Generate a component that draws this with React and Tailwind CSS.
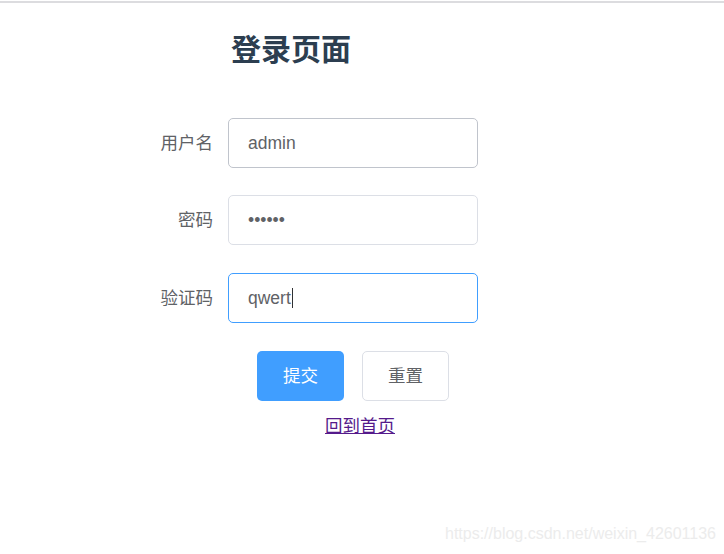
import React from "react";

const font = { fontFamily: '"Liberation Sans", "Noto Sans CJK SC", sans-serif' };

function Row({ label, value, border, caret, mt }) {
  return (
    <div className={`flex items-center ${mt}`}>
      <label className="w-[100px] pr-[15px] text-right text-[17.5px] text-[#606266]">{label}</label>
      <div
        className={`w-[250px] h-[50px] rounded-[5px] border bg-white flex items-center px-[19px] text-[17.5px] text-[#606266] ${border}`}
      >
        <span>{value}</span>
        {caret && <span className="w-px h-[20px] bg-[#303133] ml-px" />}
      </div>
    </div>
  );
}

export default function App() {
  return (
    <div className="w-[724px] h-[554px] bg-white relative overflow-hidden" style={font}>
      <div className="mt-px h-[2px] bg-[#dcdcdf]" />
      <h1 className="mt-[27px] ml-[231px] text-[30px] leading-[40px] font-bold text-[#2c3e50]">登录页面</h1>

      <div className="ml-[128px] mt-[48px]">
        <Row label="用户名" value="admin" border="border-[#c0c4cc]" mt="" />
        <Row label="密码" value="••••••" border="border-[#dcdfe6]" mt="mt-[27px]" />
        <Row label="验证码" value="qwert" border="border-[#409eff]" caret mt="mt-[28px]" />

        <div className="flex gap-[18px] ml-[129px] mt-[28px]">
          <button className="w-[87px] h-[50px] rounded-[5px] bg-[#409eff] text-white text-[17.5px]">提交</button>
          <button className="w-[87px] h-[50px] rounded-[5px] border border-[#dcdfe6] bg-white text-[#606266] text-[17.5px]">重置</button>
        </div>
      </div>

      <div className="mt-[13px] ml-[325px]">
        <a href="#" className="text-[17.5px] text-[#551a8b] underline leading-[24px]">回到首页</a>
      </div>

      <div className="absolute right-[8px] bottom-[8px] text-[16px] text-[#ececec]">https://blog.csdn.net/weixin_42601136</div>
    </div>
  );
}
